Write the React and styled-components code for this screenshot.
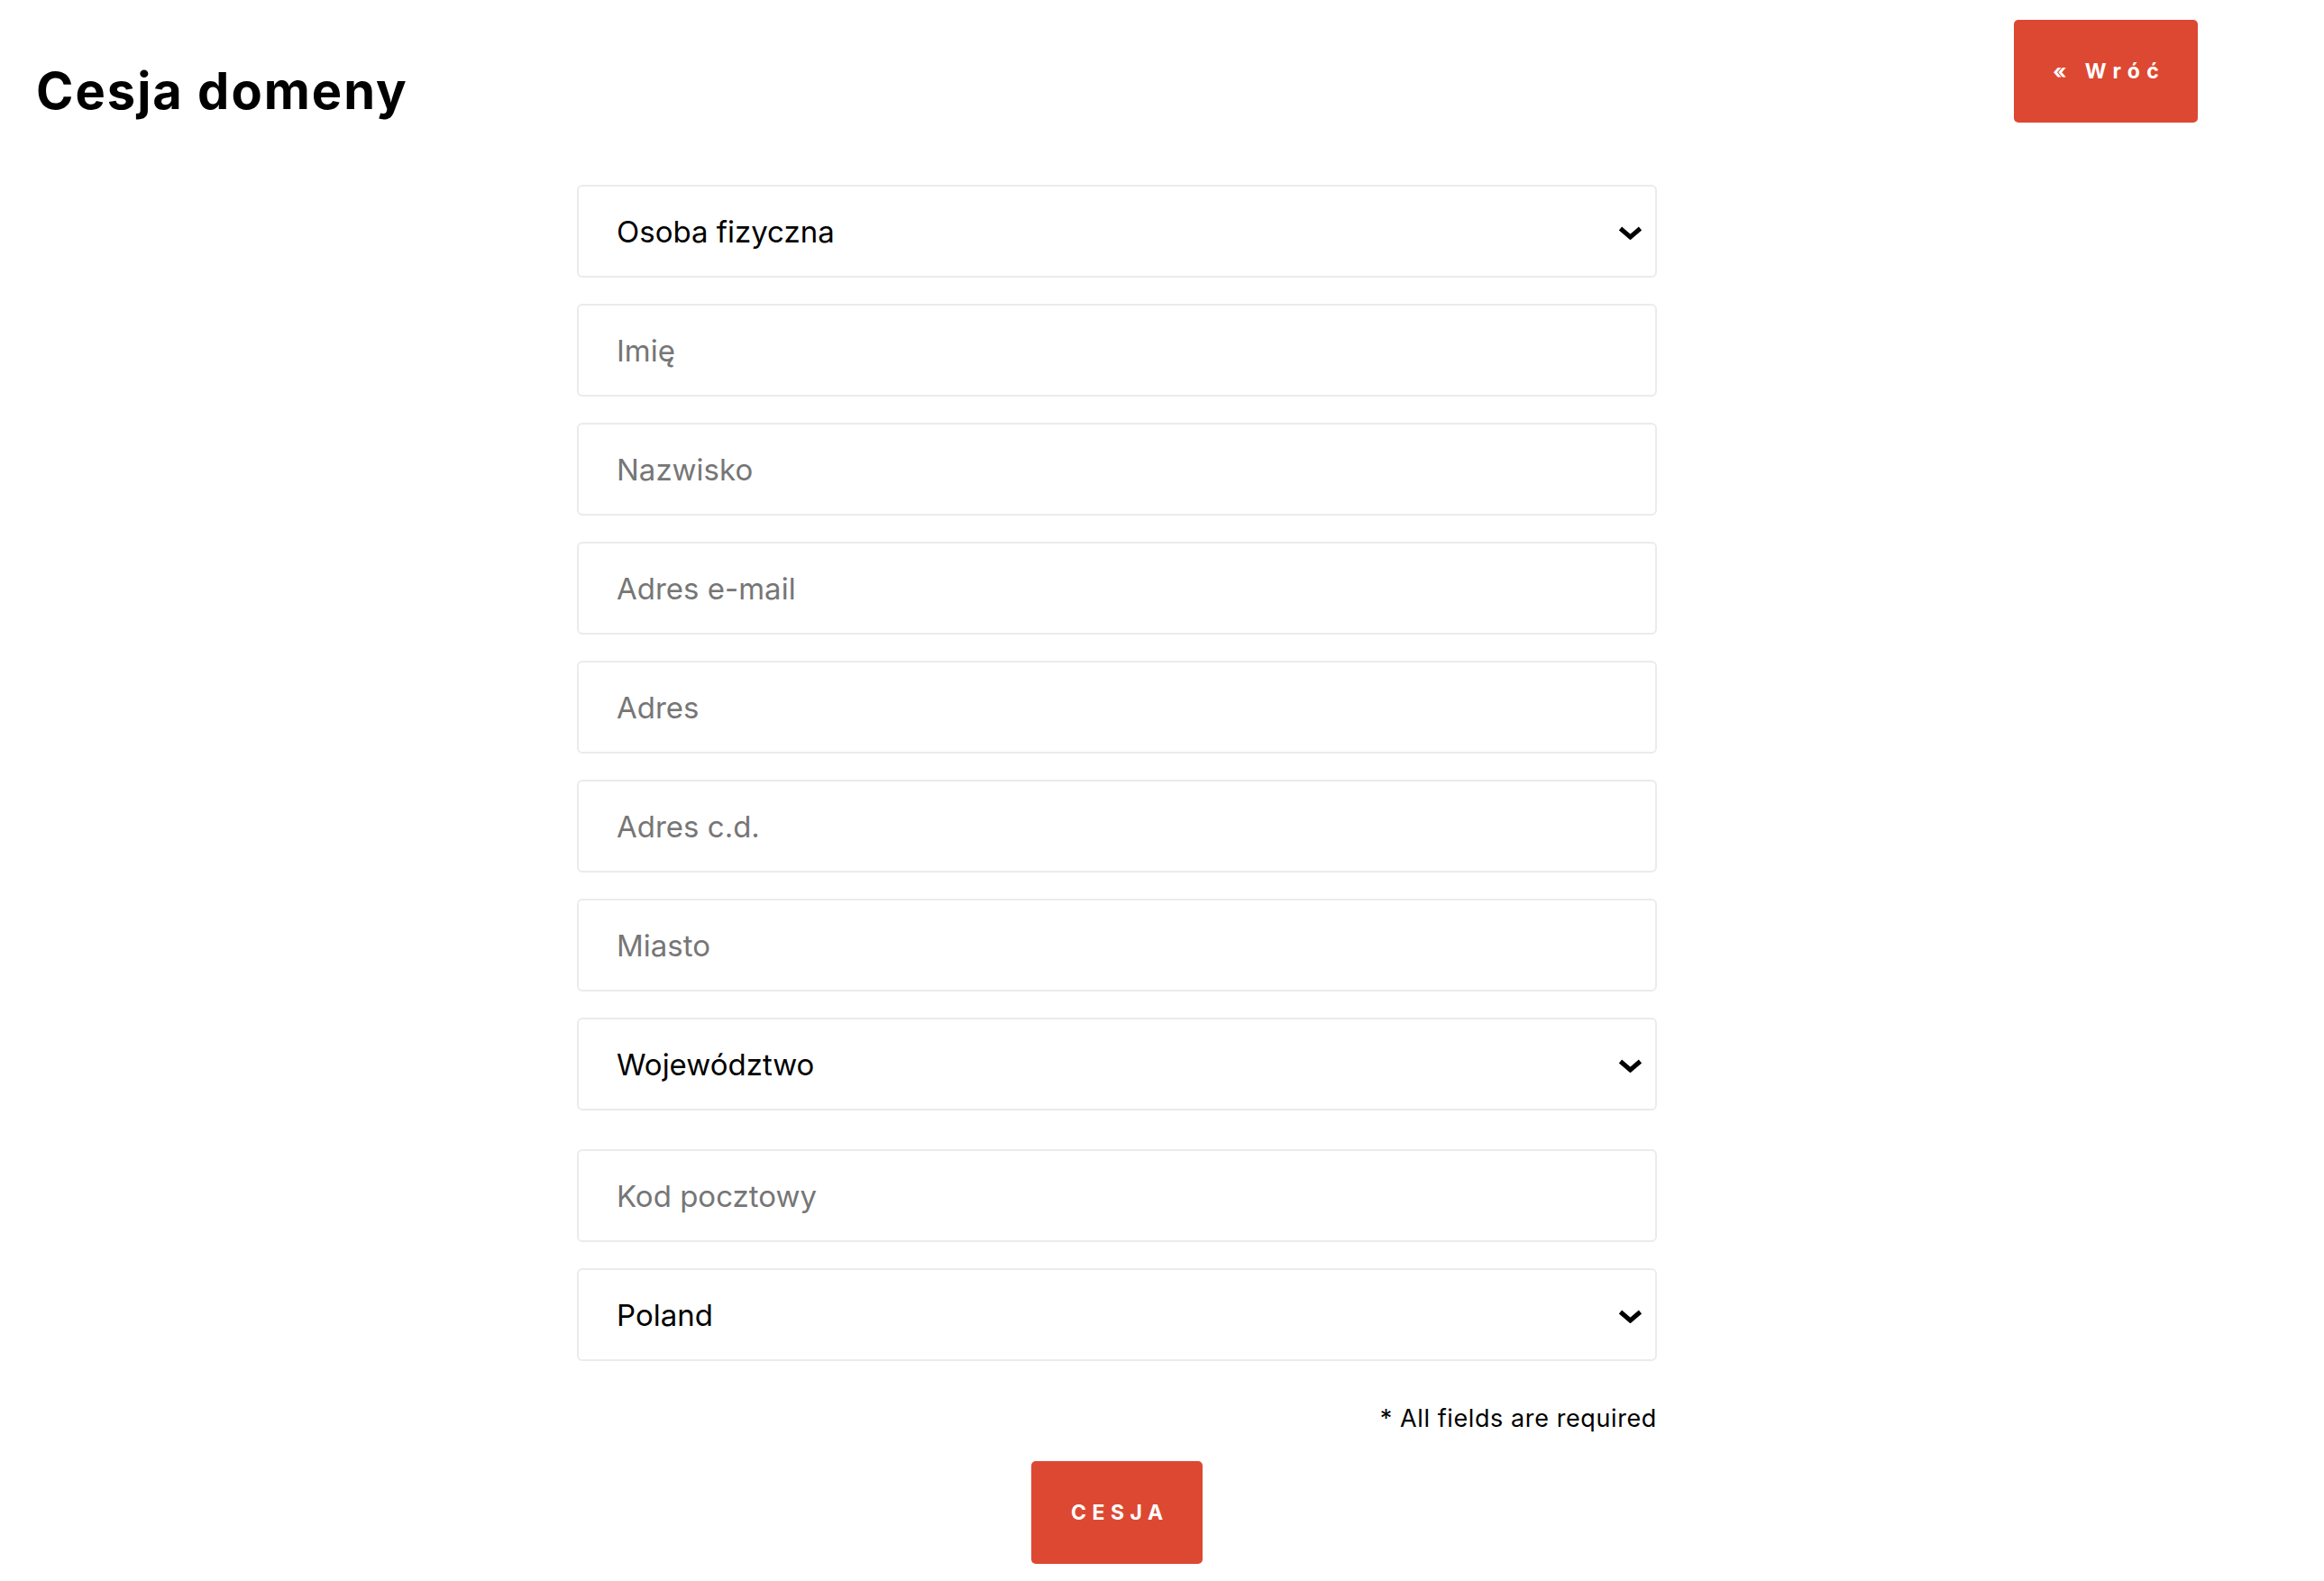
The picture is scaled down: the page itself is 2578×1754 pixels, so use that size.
import styled, { createGlobalStyle } from 'styled-components';

const GlobalStyle = createGlobalStyle`
  body {
    margin: 0;
    background: #fff;
    font-family: Inter, 'Open Sans', 'Liberation Sans', sans-serif;
    color: #000;
  }
  * {
    box-sizing: border-box;
  }
`;

const Chevron = () => (
  <svg width="27" height="15" viewBox="0 0 27 15">
    <polyline
      points="2.5,2.5 13.5,12 24.5,2.5"
      fill="none"
      stroke="#000"
      strokeWidth="5"
      strokeLinejoin="miter"
    />
  </svg>
);

const SELECT_FIELDS = {
  kind: ['Osoba fizyczna', 'Firma'],
  region: [
    'Województwo',
    'dolnośląskie',
    'kujawsko-pomorskie',
    'lubelskie',
    'lubuskie',
    'łódzkie',
    'małopolskie',
    'mazowieckie',
    'opolskie',
    'podkarpackie',
    'podlaskie',
    'pomorskie',
    'śląskie',
    'świętokrzyskie',
    'warmińsko-mazurskie',
    'wielkopolskie',
    'zachodniopomorskie',
  ],
  country: ['Poland', 'Germany', 'Czech Republic'],
};

const App = () => {
  return (
    <>
      <GlobalStyle />
      <Page>
        <Header>
          <Title>Cesja domeny</Title>
          <RedButton href="#" $w={204} $spacing={7.5}>
            « Wróć
          </RedButton>
        </Header>

        <Form onSubmit={(e) => e.preventDefault()}>
          <FieldList>
            <SelectWrap>
              <Select defaultValue="Osoba fizyczna">
                {SELECT_FIELDS.kind.map((o) => (
                  <option key={o}>{o}</option>
                ))}
              </Select>
              <ChevronBox>
                <Chevron />
              </ChevronBox>
            </SelectWrap>
            <Input placeholder="Imię" />
            <Input placeholder="Nazwisko" />
            <Input placeholder="Adres e-mail" />
            <Input placeholder="Adres" />
            <Input placeholder="Adres c.d." />
            <Input placeholder="Miasto" />
            <SelectWrap $spaced>
              <Select defaultValue="Województwo">
                {SELECT_FIELDS.region.map((o) => (
                  <option key={o}>{o}</option>
                ))}
              </Select>
              <ChevronBox>
                <Chevron />
              </ChevronBox>
            </SelectWrap>
            <Input placeholder="Kod pocztowy" />
            <SelectWrap>
              <Select defaultValue="Poland">
                {SELECT_FIELDS.country.map((o) => (
                  <option key={o}>{o}</option>
                ))}
              </Select>
              <ChevronBox>
                <Chevron />
              </ChevronBox>
            </SelectWrap>
          </FieldList>

          <Note>* All fields are required</Note>
          <SubmitRow>
            <RedButton as="button" type="submit" $w={190} $spacing={6.5} $upper>
              Cesja
            </RedButton>
          </SubmitRow>
        </Form>
      </Page>
    </>
  );
};
export default App;

const Page = styled.div`
  padding: 22px 140px 0 40px;
`;

const Header = styled.div`
  display: flex;
  justify-content: space-between;
  align-items: flex-start;
`;

const Title = styled.h1`
  margin: 51px 0 0;
  font-size: 56px;
  line-height: 56px;
  font-weight: 700;
  letter-spacing: 2px;
  color: #000;
`;

const RedButton = styled.a`
  display: flex;
  align-items: center;
  justify-content: center;
  width: ${(p) => p.$w}px;
  height: 114px;
  padding: 0 0 0 ${(p) => p.$spacing}px;
  border: none;
  border-radius: 5px;
  background: #dd4832;
  color: #fff;
  font-family: Inter, 'Open Sans', sans-serif;
  font-size: 23px;
  font-weight: 700;
  letter-spacing: ${(p) => p.$spacing}px;
  text-transform: ${(p) => (p.$upper ? 'uppercase' : 'none')};
  text-decoration: none;
  cursor: pointer;
`;

const Form = styled.form`
  width: 1198px;
  margin: 69px auto 0;
`;

const FieldList = styled.div`
  display: flex;
  flex-direction: column;
  gap: 29px;
`;

const fieldBase = `
  width: 100%;
  height: 103px;
  padding: 0 60px 0 42px;
  border: 2px solid #ebebeb;
  border-radius: 6px;
  background: #fff;
  font-family: Inter, 'Open Sans', sans-serif;
  font-size: 33px;
  outline: none;
`;

const Input = styled.input`
  ${fieldBase}
  color: #000;

  &::placeholder {
    color: #767676;
  }
`;

const SelectWrap = styled.div`
  position: relative;
  margin-bottom: ${(p) => (p.$spaced ? '14px' : '0')};
`;

const Select = styled.select`
  ${fieldBase}
  display: block;
  appearance: none;
  -webkit-appearance: none;
  color: #000;
  cursor: pointer;
`;

const ChevronBox = styled.span`
  position: absolute;
  right: 16px;
  top: 50%;
  transform: translateY(-40%);
  display: flex;
  pointer-events: none;
`;

const Note = styled.p`
  margin: 48px 0 0;
  text-align: right;
  font-size: 27px;
  line-height: 32px;
  letter-spacing: 0.6px;
  color: #000;
`;

const SubmitRow = styled.div`
  display: flex;
  justify-content: center;
  margin-top: 31px;
`;
